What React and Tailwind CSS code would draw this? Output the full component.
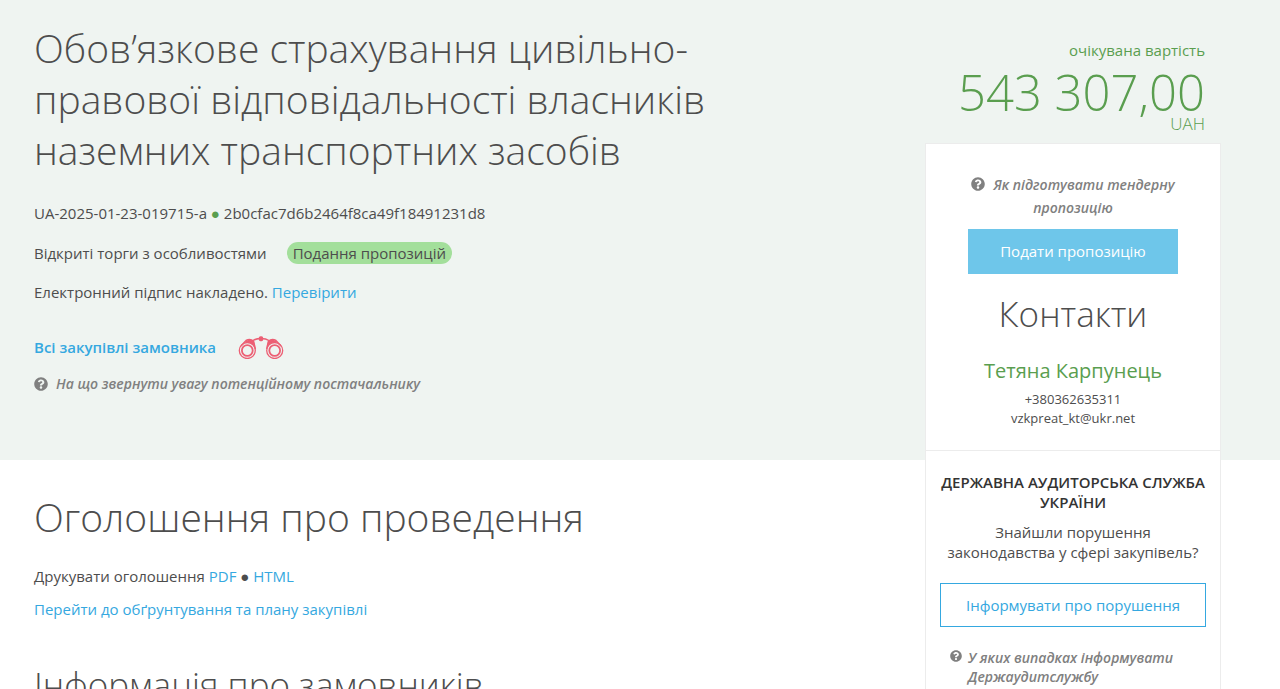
import React from 'react';
import { FaQuestionCircle } from 'react-icons/fa';

const Binoculars = () => (
  <svg viewBox="0 0 46 24" className="w-[46px] h-6" fill="none" stroke="#ec5f74" aria-hidden="true">
    <circle cx="9.3" cy="15.5" r="8" strokeWidth="1.3" />
    <circle cx="9.3" cy="15.5" r="5.4" strokeWidth="1.8" />
    <circle cx="36.7" cy="15.5" r="8" strokeWidth="1.3" />
    <circle cx="36.7" cy="15.5" r="5.4" strokeWidth="1.8" />
    <path d="M3 11 L8 5.500 Q12 3.500 15.500 6 L17.300 14" strokeWidth="1.5" />
    <path d="M43 11 L38 5.500 Q34 3.500 30.500 6 L28.700 14" strokeWidth="1.5" />
    <path d="M8.500 6.500 Q12 4.500 15 6 L16 9.500 Q12.500 6.500 8.500 6.500 Z" fill="#ec5f74" strokeWidth="1.4" />
    <path d="M37.500 6.500 Q34 4.500 31 6 L30 9.500 Q33.500 6.500 37.500 6.500 Z" fill="#ec5f74" strokeWidth="1.4" />
    <path d="M15 5.500 Q18 3.500 23 3.500 Q28 3.500 31 5.500" strokeWidth="1.5" />
    <rect x="21.5" y="2" width="3" height="3.5" rx="1" fill="#ec5f74" strokeWidth="1.4" />
  </svg>
);

const Hero = () => (
  <header className="col-span-full row-start-1 bg-[#eff4f1] pl-[34px] pr-[400px] pt-[22px] pb-16">
    <div className="max-w-[700px]">
      <h1 className="text-[39px] leading-[51px] font-light">
        Обов’язкове страхування цивільно-правової відповідальності власників наземних транспортних засобів
      </h1>
      <p className="mt-[26px] leading-6">
        UA-2025-01-23-019715-a <span className="text-[#5a9e4f]">●</span> 2b0cfac7d6b2464f8ca49f18491231d8
      </p>
      <p className="mt-4 leading-6 flex items-center gap-5">
        Відкриті торги з особливостями
        <span className="rounded-full bg-[#a3df9b] px-[6px] leading-[22px]">Подання пропозицій</span>
      </p>
      <p className="mt-[15px] leading-6">
        Електронний підпис накладено. <a href="#sign" className="text-[#35a8e0]">Перевірити</a>
      </p>
      <div className="mt-[31px] flex items-center gap-[22px]">
        <a href="#all" className="font-semibold leading-6 text-[#35a8e0]">Всі закупівлі замовника</a>
        <Binoculars />
      </div>
      <a href="#tips" className="mt-[13px] flex items-center gap-2 text-sm leading-6 font-semibold italic text-[#808080]">
        <FaQuestionCircle className="size-[14px]" />
        На що звернути увагу потенційному постачальнику
      </a>
    </div>
  </header>
);

const Announcement = () => (
  <main className="col-start-1 row-start-2 pl-[34px] pt-[31px] pb-16">
    <h2 className="text-[39px] leading-[52px] font-light">Оголошення про проведення</h2>
    <p className="mt-[21px] leading-6">
      Друкувати оголошення <a href="#pdf" className="text-[#35a8e0]">PDF</a> ●{' '}
      <a href="#html" className="text-[#35a8e0]">HTML</a>
    </p>
    <p className="mt-[9px] leading-6">
      <a href="#plan" className="text-[#35a8e0]">Перейти до обґрунтування та плану закупівлі</a>
    </p>
    <h2 className="mt-10 text-[35px] leading-[48px] font-light">Інформація про замовників</h2>
  </main>
);

const Sidebar = () => (
  <aside className="col-start-2 row-start-1 row-span-2 pt-[38px]">
    <div className="pr-4 pb-[9px] text-right text-[#5a9e4f]">
      <div className="leading-6">очікувана вартість</div>
      <div className="mt-2 text-[49px] leading-[44px] font-light">543 307,00</div>
      <div className="text-[17px] leading-5 font-light">UAH</div>
    </div>

    <div className="border border-[#ececec] bg-white text-center">
      <div className="px-[42px] pt-[29px] pb-[22px]">
        <a href="#prepare" className="block text-sm leading-[23px] font-semibold italic text-[#808080]">
          <FaQuestionCircle className="mr-2 inline size-[14px] align-[-1px]" />
          Як підготувати тендерну пропозицію
        </a>
        <button type="button" className="mt-[10px] w-full h-[45px] bg-[#6ec6ea] text-white">Подати пропозицію</button>
        <h2 className="mt-4 text-[35px] leading-[48px] font-light">Контакти</h2>
        <h3 className="mt-5 text-xl leading-[26px] text-[#5a9e4f]">Тетяна Карпунець</h3>
        <div className="mt-[6px] text-[13px] leading-[19px]">
          <div>+380362635311</div>
          <div>vzkpreat_kt@ukr.net</div>
        </div>
      </div>

      <div className="border-t border-[#ececec] px-[14px] pt-[21px] pb-8">
        <h4 className="leading-5 font-semibold text-[#333]">ДЕРЖАВНА АУДИТОРСЬКА СЛУЖБА УКРАЇНИ</h4>
        <p className="mt-[10px] leading-5">Знайшли порушення законодавства у сфері закупівель?</p>
        <button type="button" className="mt-[21px] w-full h-11 border border-[#35a8e0] text-[#35a8e0]">
          Інформувати про порушення
        </button>
        <a href="#cases" className="mt-[21px] flex gap-[6px] px-[10px] text-left text-sm leading-[19px] font-semibold italic text-[#808080]">
          <FaQuestionCircle className="mt-[2px] size-3 shrink-0" />
          У яких випадках інформувати Держаудитслужбу
        </a>
      </div>
    </div>
  </aside>
);

const App = () => (
  <div className="grid min-h-screen grid-cols-[minmax(0,1fr)_296px_59px] grid-rows-[auto_1fr] bg-white font-['Open_Sans',sans-serif] text-[15px] text-[#4d4d4d]">
    <Hero />
    <Announcement />
    <Sidebar />
  </div>
);

export default App;
